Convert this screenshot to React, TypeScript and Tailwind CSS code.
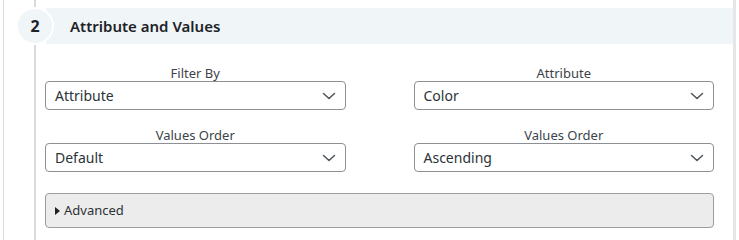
import React from "react";

function Chevron() {
  return (
    <svg width="14" height="8" viewBox="0 0 14 8" fill="none" className="shrink-0">
      <path d="M1.5 1.5 L7 6.5 L12.5 1.5" stroke="#50575e" strokeWidth="1.6" strokeLinecap="round" strokeLinejoin="round" />
    </svg>
  );
}

function Field({ label, value }: { label: string; value: string }) {
  return (
    <div className="flex flex-col">
      <div className="h-[16px] text-center text-[13px] leading-[16px] text-[#3c434a]">{label}</div>
      <div className="flex h-[29px] items-center justify-between rounded-[4px] border border-[#8c8f94] bg-white pl-[9px] pr-[9px] text-[14px] text-[#2c3338]">
        <span>{value}</span>
        <Chevron />
      </div>
    </div>
  );
}

export default function App() {
  return (
    <div className="h-[240px] w-[739px] bg-white pl-[3px] pr-[3px] font-['Noto_Sans',sans-serif]">
      <div className="relative h-full border-l border-r-[3px] border-l-[#dcdcde] border-r-[#e6e6e6]">
        <div className="absolute bottom-0 left-[30px] top-0 w-[2px] bg-[#d7dadd]" />
        <div className="relative pt-[7px]">
          <div className="flex items-center">
            <div className="z-10 ml-[12px] flex h-[38px] w-[38px] items-center justify-center rounded-full border-2 border-white bg-[#f0f5f8] text-[16px] font-bold text-[#1d2327]">
              2
            </div>
            <div className="-ml-[8px] flex h-[36px] flex-1 items-center bg-[#f0f5f8] pl-[24px] text-[15px] font-semibold text-[#1d2327]">
              Attribute and Values
            </div>
          </div>
          <div className="pl-[41px] pr-[19px] pt-[20px]">
            <div className="grid grid-cols-2 gap-x-[68px] gap-y-[17px]">
              <Field label="Filter By" value="Attribute" />
              <Field label="Attribute" value="Color" />
              <Field label="Values Order" value="Default" />
              <Field label="Values Order" value="Ascending" />
            </div>
            <div className="mt-[21px] flex h-[35px] items-center rounded-[4px] border border-[#9a9da1] bg-[#ececec] pl-[9px] text-[13px] text-[#2c3338]">
              <svg width="5" height="8" viewBox="0 0 5 8" className="mr-[4px] shrink-0">
                <path d="M0 0 L5 4 L0 8 Z" fill="#1d2327" />
              </svg>
              Advanced
            </div>
          </div>
        </div>
      </div>
    </div>
  );
}
